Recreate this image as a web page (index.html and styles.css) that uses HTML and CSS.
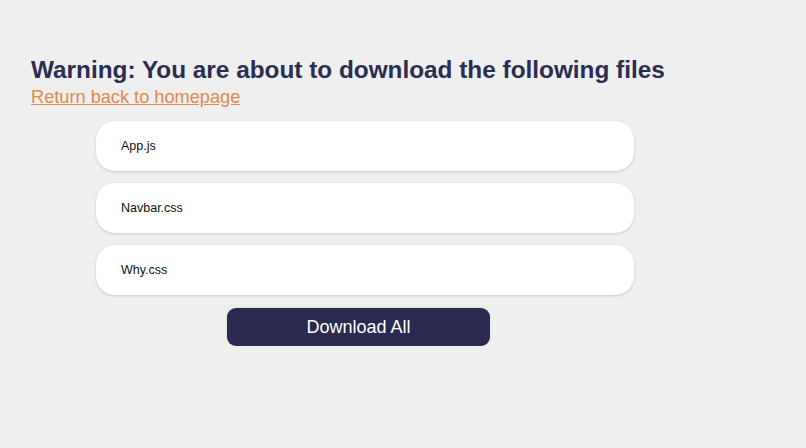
FILE: index.html
```html
<!DOCTYPE html>
<html>
<head>
<meta charset="utf-8">
<link rel="stylesheet" href="styles.css">
</head>
<body>
<main class="page">
  <h1 class="title">Warning: You are about to download the following files</h1>
  <a class="back" href="#">Return back to homepage</a>
  <ul class="files">
    <li class="file">App.js</li>
    <li class="file">Navbar.css</li>
    <li class="file">Why.css</li>
  </ul>
  <div class="actions">
    <button class="download">Download All</button>
  </div>
</main>
</body>
</html>
```
FILE: styles.css
```css
html, body {
  margin: 0;
  padding: 0;
  background: #efefef;
  font-family: "Liberation Sans", Arial, sans-serif;
}
.page {
  padding: 55px 31px 0;
  display: flex;
  flex-direction: column;
  align-items: flex-start;
}
.title {
  margin: 0;
  font-size: 24.35px;
  line-height: 30px;
  font-weight: 700;
  color: #2b2d53;
}
.back {
  font-size: 18.2px;
  line-height: 24px;
  color: #e08a4c;
  text-decoration: underline;
}
.files {
  list-style: none;
  margin: 12px 0 0 65px;
  padding: 0;
  display: flex;
  flex-direction: column;
  gap: 12px;
  width: 538px;
}
.file {
  box-sizing: border-box;
  height: 50px;
  background: #fff;
  border-radius: 19px;
  box-shadow: 0 1px 3px rgba(0,0,0,0.16);
  padding: 0 25px;
  display: flex;
  align-items: center;
  font-size: 12.5px;
  color: #111;
}
.actions {
  margin: 13px 0 0 196px;
}
.download {
  width: 263px;
  height: 38px;
  border: none;
  border-radius: 9px;
  background: #2a2a52;
  color: #fff;
  font-family: "Liberation Sans", Arial, sans-serif;
  font-size: 18px;
  padding: 0;
  box-shadow: 0 0 2px rgba(0,0,0,0.15);
}
```
